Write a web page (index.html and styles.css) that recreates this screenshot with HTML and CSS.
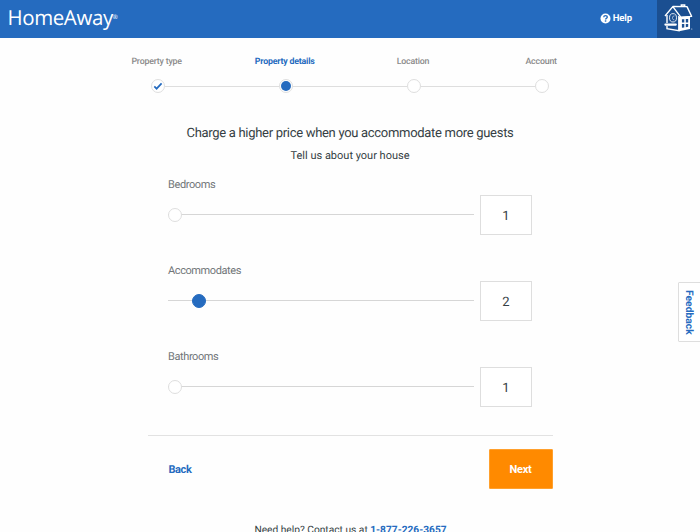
FILE: index.html
```html
<!DOCTYPE html>
<html lang="en">
<head>
<meta charset="utf-8">
<title>HomeAway</title>
<link rel="stylesheet" href="styles.css">
</head>
<body>
<header class="topbar">
  <div class="brand">HomeAway<span class="reg">®</span></div>
  <a class="help">
    <svg width="11" height="11" viewBox="0 0 11 11"><circle cx="5.5" cy="5.5" r="5" fill="#fff"/><path d="M3.7 4.3Q3.8 2.6 5.5 2.6Q7.3 2.6 7.3 4.1Q7.3 4.9 6.4 5.4Q5.6 5.8 5.6 6.6" fill="none" stroke="#256bbf" stroke-width="1.4"/><rect x="4.8" y="7.3" width="1.5" height="1.4" fill="#256bbf"/></svg>
    <span>Help</span>
  </a>
  <div class="house">
    <svg width="30" height="28" viewBox="0 0 30 28" fill="none" stroke="#fff">
      <path d="M1 12L9 2.4L23 2.6L27.6 12.4L16.8 13.2L9 2.8" stroke-width="1.4" stroke-linejoin="round"/>
      <path d="M17.4 2.4V1H20.6V2.4" stroke-width="1.6"/>
      <path d="M3 11V19M3 22V24.6L14.8 26.6V12" stroke-width="1.4"/>
      <path d="M15 13L26 12.6V25L15 27.2Z" fill="#fff" stroke="none"/>
      <path d="M17.9 15.2H20.3V18.6H17.9ZM21.8 15.1H24.2V18.5H21.8ZM17.9 20.1H20.3V23.4L17.9 23.8ZM21.8 20H24.2V22.8L21.8 23.2Z" fill="#1b4f91" stroke="none"/>
      <ellipse cx="9" cy="13.8" rx="3.5" ry="4.2" stroke-width="1" stroke-opacity=".85"/>
      <path d="M10.4 11.8Q8.2 12 8.4 14.2Q8.6 16 10.4 16" stroke-width=".8" stroke-opacity=".7"/>
      <path d="M1.4 20.6H11.8" stroke-width="2.2" stroke-linecap="round"/>
      <circle cx="27.8" cy="25" r=".5" fill="#fff" stroke="none"/>
    </svg>
  </div>
</header>

<main class="page">
  <ol class="steps">
    <li class="step"><span class="step-name">Property type</span><span class="dot"><svg width="10" height="10" viewBox="0 0 10 10"><path d="M1.3 5.4L3.6 7.7L8.6 2.4" fill="none" stroke="#256bbf" stroke-width="1.7"/></svg></span></li>
    <li class="step current"><span class="step-name">Property details</span><span class="dot"></span></li>
    <li class="step"><span class="step-name">Location</span><span class="dot"></span></li>
    <li class="step"><span class="step-name">Account</span><span class="dot"></span></li>
  </ol>

  <h1 class="title">Charge a higher price when you accommodate more guests</h1>
  <h2 class="subtitle">Tell us about your house</h2>

  <section class="fields">
    <div class="field">
      <div class="slider"><span class="label">Bedrooms</span><div class="track"><span class="knob"></span></div></div>
      <div class="value">1</div>
    </div>
    <div class="field">
      <div class="slider"><span class="label">Accommodates</span><div class="track"><span class="knob filled"></span></div></div>
      <div class="value">2</div>
    </div>
    <div class="field">
      <div class="slider"><span class="label">Bathrooms</span><div class="track"><span class="knob"></span></div></div>
      <div class="value">1</div>
    </div>
  </section>

  <div class="actions">
    <a class="back">Back</a>
    <button class="next">Next</button>
  </div>
  <p class="contact">Need help? Contact us at <b>1-877-226-3657</b></p>
</main>
<aside class="feedback">Feedback</aside>
</body>
</html>
```
FILE: styles.css
```css
* { box-sizing: border-box; }
html, body { height: 532px; overflow: hidden; }
body {
  margin: 0;
  background: #fefefe;
  color: #353e44;
  font-family: Roboto, "Liberation Sans", sans-serif;
  text-rendering: geometricPrecision;
}
.topbar {
  display: flex;
  height: 38px;
  background: #256bbf;
  color: #fff;
}
.brand {
  flex: 1;
  padding: 3px 0 0 7.5px;
  font: 400 20.5px/28px "Open Sans", "Noto Sans", sans-serif;
  letter-spacing: -0.4px;
}
.reg { font-size: 6px; vertical-align: 6px; }
.help {
  display: flex;
  align-items: center;
  gap: 2px;
  height: 37px;
  margin-right: 25px;
  font-size: 9.5px;
  font-weight: 700;
  letter-spacing: -0.1px;
}
.house {
  display: flex;
  justify-content: center;
  width: 43px;
  padding-top: 4px;
  background: #1b4f91;
}
.page { width: 405px; margin-left: 148px; }
.steps {
  display: grid;
  grid-template-columns: repeat(4, 128.2px);
  width: 513px;
  margin: 0 0 0 -54.5px;
  padding: 17.5px 0 0;
  list-style: none;
}
.step {
  position: relative;
  display: flex;
  flex-direction: column;
  align-items: center;
  font-size: 8.8px;
  line-height: 13px;
  font-weight: 500;
  letter-spacing: -0.2px;
  color: #8a8a8a;
}
.step-name { position: relative; left: -1px; white-space: nowrap; }
.step + .step::before {
  content: "";
  position: absolute;
  top: 30.5px;
  right: calc(50% + 7px);
  width: calc(100% - 14px);
  height: 1px;
  background: #dedede;
}
.current { color: #256bbf; font-weight: 700; }
.dot {
  display: flex;
  align-items: center;
  justify-content: center;
  width: 14px;
  height: 14px;
  margin-top: 10.5px;
  border: 1px solid #dedede;
  border-radius: 50%;
  background: #fff;
}
.current .dot::before {
  content: "";
  width: 10px;
  height: 10px;
  border-radius: 50%;
  background: #256bbf;
}
.title {
  margin: 33px 0 0;
  padding-right: 1px;
  font-size: 13px;
  line-height: 16px;
  font-weight: 400;
  letter-spacing: -0.3px;
  text-align: center;
  white-space: nowrap;
}
.subtitle {
  margin: 7px 0 0;
  padding-right: 1px;
  font-size: 11px;
  line-height: 14px;
  font-weight: 400;
  text-align: center;
}
.fields { padding: 15px 21px 0 20px; }
.field { display: flex; justify-content: space-between; height: 86px; }
.slider { width: 306px; }
.label {
  display: block;
  font-size: 11px;
  line-height: 14px;
  letter-spacing: -0.4px;
  color: #717679;
}
.track {
  display: flex;
  align-items: center;
  height: 14px;
  margin-top: 16px;
  background: linear-gradient(#d6d6d6, #d6d6d6) 0 6px / 100% 1px no-repeat;
}
.knob {
  width: 14px;
  height: 14px;
  border: 1px solid #dedede;
  border-radius: 50%;
  background: #fff;
}
.knob.filled { margin-left: 24px; border-color: #256bbf; background: #256bbf; }
.value {
  width: 52px;
  height: 40px;
  margin-top: 17px;
  border: 1px solid #dedede;
  background: #fff;
  font-size: 13px;
  line-height: 41px;
  text-align: center;
}
.actions {
  display: flex;
  justify-content: space-between;
  align-items: center;
  width: 404.5px;
  margin-top: -1px;
  padding: 13px 0 0 20.5px;
  border-top: 1px solid #e2e2e2;
  font-size: 11px;
}
.back { color: #256bbf; font-weight: 700; letter-spacing: -0.4px; }
.next {
  width: 64px;
  height: 40px;
  padding: 0;
  border: 1px solid #ffa02d;
  border-radius: 1px;
  background: #ff8a00;
  color: #fff;
  font: 700 11px Roboto, sans-serif;
  letter-spacing: -0.3px;
}
.contact {
  margin: 35px 0 0;
  font-size: 10.2px;
  line-height: 14px;
  text-align: center;
  white-space: nowrap;
}
.contact b { color: #256bbf; }
.feedback {
  position: fixed;
  top: 282px;
  right: -1px;
  width: 23px;
  height: 60px;
  border: 1px solid #dedede;
  border-radius: 1px;
  background: #fff;
  color: #256bbf;
  font-size: 10.3px;
  line-height: 21px;
  font-weight: 700;
  text-align: center;
  writing-mode: vertical-rl;
}
```
